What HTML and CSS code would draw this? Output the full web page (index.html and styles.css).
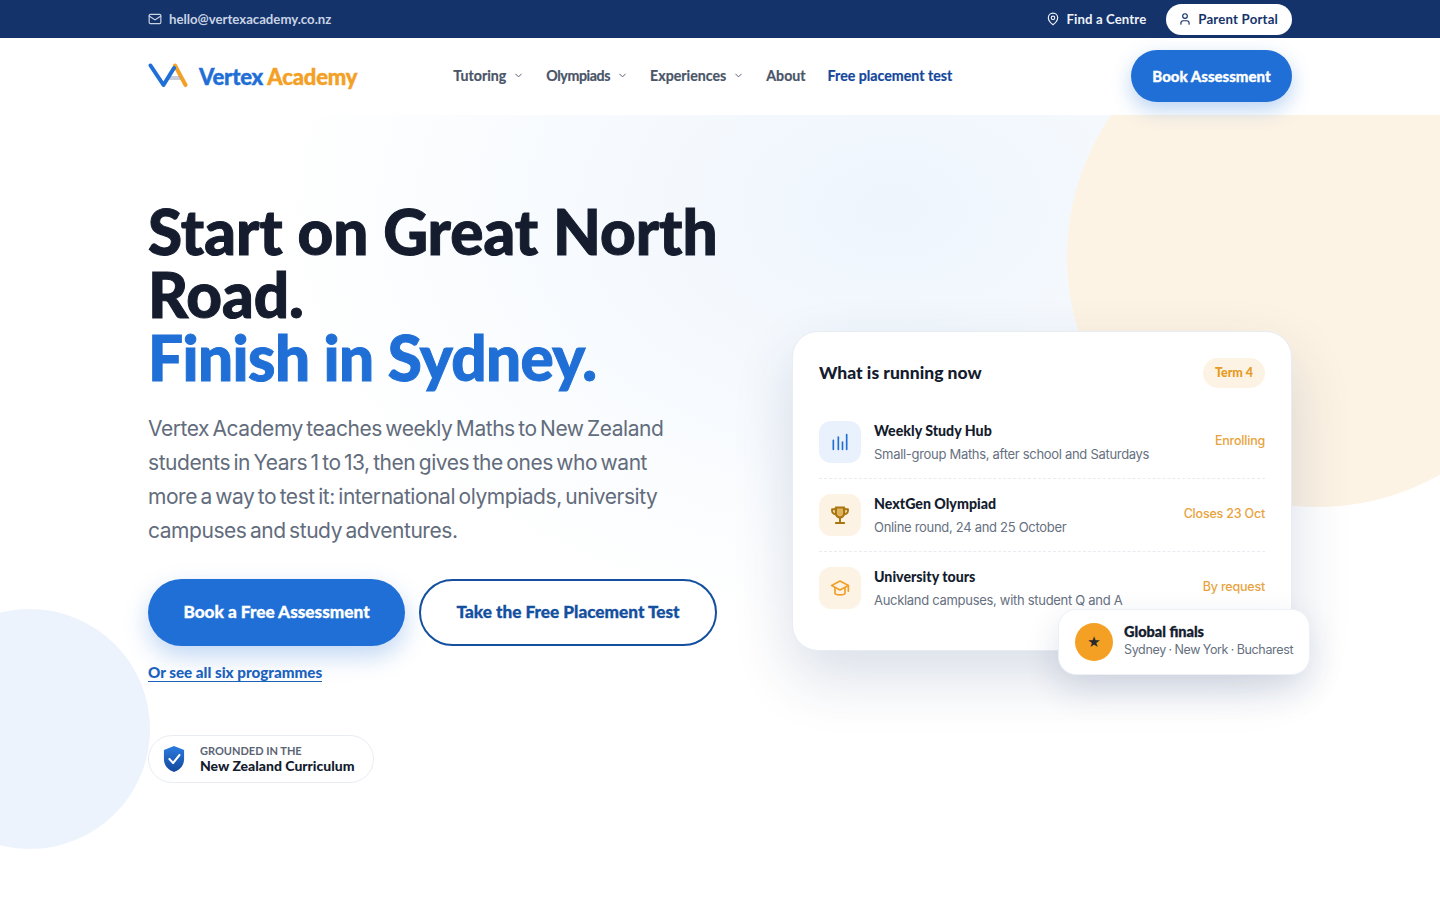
FILE: index.html
```html
<!DOCTYPE html>
<html lang="en">
<head>
<meta charset="UTF-8">
<meta name="viewport" content="width=device-width, initial-scale=1.0">
<title>Vertex Academy</title>
<link rel="stylesheet" href="styles.css">
</head>
<body>

<!-- Top bar -->
<div class="topbar">
    <div class="wrap topbar-inner">
        <a class="top-mail" href="#">
            <svg class="icon-14" viewBox="0 0 24 24"><rect x="2" y="4" width="20" height="16" rx="2"/><path d="m22 7-8.97 5.7a1.94 1.94 0 0 1-2.06 0L2 7"/></svg>
            hello@vertexacademy.co.nz
        </a>
        <div class="top-right">
            <a class="top-link" href="#">
                <svg class="icon-14" viewBox="0 0 24 24"><path d="M20 10c0 6-8 12-8 12s-8-6-8-12a8 8 0 0 1 16 0Z"/><circle cx="12" cy="10" r="3"/></svg>
                Find a Centre
            </a>
            <a class="portal" href="#">
                <svg class="icon-14" viewBox="0 0 24 24"><path d="M19 21v-2a4 4 0 0 0-4-4H9a4 4 0 0 0-4 4v2"/><circle cx="12" cy="7" r="4"/></svg>
                Parent Portal
            </a>
        </div>
    </div>
</div>

<!-- Navigation -->
<header class="navbar">
    <div class="wrap navbar-inner">
        <a class="logo" href="#">
            <svg class="logo-mark" viewBox="0 0 40 26">
                <path class="logo-a" d="M27 2.500 37.500 22"/>
                <path class="logo-bar" d="M21 14h11M20 16h12"/>
                <path class="logo-v" d="M2.500 2.500 15.500 22 26 5"/>
            </svg>
            <span class="logo-text"><span class="logo-blue">Vertex</span> <span class="logo-orange">Academy</span></span>
        </a>
        <nav class="nav-links">
            <a href="#">Tutoring <svg class="chev" viewBox="0 0 24 24"><path d="m6 9 6 6 6-6"/></svg></a>
            <a class="nav-oly" href="#">Olympiads <svg class="chev" viewBox="0 0 24 24"><path d="m6 9 6 6 6-6"/></svg></a>
            <a href="#">Experiences <svg class="chev" viewBox="0 0 24 24"><path d="m6 9 6 6 6-6"/></svg></a>
            <a href="#">About</a>
            <a class="nav-free" href="#">Free placement test</a>
        </nav>
        <a class="nav-book" href="#">Book Assessment</a>
    </div>
</header>

<!-- Hero -->
<section class="hero">
    <div class="circle-peach"></div>
    <div class="circle-blue"></div>
    <div class="wrap hero-grid">
        <div class="hero-left">
            <h1>Start on Great North Road. <span class="h1-blue">Finish in Sydney.</span></h1>
            <p class="lead">Vertex Academy teaches weekly Maths to New Zealand students in Years 1 to 13, then gives the ones who want more a way to test it: international olympiads, university campuses and study adventures.</p>
            <div class="hero-btns">
                <a class="btn btn-solid" href="#">Book a Free Assessment</a>
                <a class="btn btn-line" href="#">Take the Free Placement Test</a>
            </div>
            <a class="all-link" href="#">Or see all six programmes</a>
            <div class="curriculum">
                <svg class="shield" viewBox="0 0 24 28" preserveAspectRatio="none">
                    <defs><linearGradient id="shieldFill" x1="0" y1="0" x2="0" y2="1"><stop offset="0" stop-color="#2b7be0"/><stop offset="1" stop-color="#14479c"/></linearGradient></defs>
                    <path fill="url(#shieldFill)" d="M12 1 23 5v9c0 7-5 11-11 13C6 25 1 21 1 14V5Z"/>
                    <path class="shield-tick" d="m7 14 4 4 7-8"/>
                </svg>
                <div class="cur-text">
                    <div class="cur-small">GROUNDED IN THE</div>
                    <div class="cur-big">New Zealand Curriculum</div>
                </div>
            </div>
        </div>

        <div class="card">
            <div class="card-head">
                <h3>What is running now</h3>
                <span class="term">Term 4</span>
            </div>
            <div class="row">
                <div class="row-icon tint-blue">
                    <svg viewBox="0 0 24 24" class="icon-bars"><path d="M4 10v11M10 6v15M15 12v9M20 3v18"/></svg>
                </div>
                <div class="row-body">
                    <div class="row-title">Weekly Study Hub</div>
                    <div class="row-sub">Small-group Maths, after school and Saturdays</div>
                </div>
                <div class="row-status">Enrolling</div>
            </div>
            <div class="row">
                <div class="row-icon tint-peach">
                    <svg viewBox="0 0 24 24" class="icon-trophy"><path d="M7 3h10v7a5 5 0 0 1-10 0Z" fill="#e0b25c" stroke-width="2.600"/><path d="M7 5H2.500v2A4 4 0 0 0 7 11M17 5h4.500v2A4 4 0 0 1 17 11M12 15v6M7 21.500h10" stroke-width="2.400"/></svg>
                </div>
                <div class="row-body">
                    <div class="row-title">NextGen Olympiad</div>
                    <div class="row-sub">Online round, 24 and 25 October</div>
                </div>
                <div class="row-status">Closes 23 Oct</div>
            </div>
            <div class="row row-last">
                <div class="row-icon tint-peach">
                    <svg viewBox="0 0 24 24" class="icon-cap"><path d="M12 3.500 22 9l-10 5.500L2 9Z"/><path d="M6 11.500V18c0 3 12 3 12 0v-6.500"/><path d="M22 9v7"/></svg>
                </div>
                <div class="row-body">
                    <div class="row-title">University tours</div>
                    <div class="row-sub">Auckland campuses, with student Q and A</div>
                </div>
                <div class="row-status">By request</div>
            </div>
            <div class="float-card">
                <div class="star">★</div>
                <div class="float-text">
                    <div class="float-title">Global finals</div>
                    <div class="float-sub">Sydney · New York · Bucharest</div>
                </div>
            </div>
        </div>
    </div>
</section>

</body>
</html>
```

FILE: styles.css
```css
/* General Styles */
* {
    margin: 0;
    padding: 0;
    box-sizing: border-box;
}

body {
    font-family: 'Inter', 'Liberation Sans', sans-serif;
    background: #fff;
    color: #141c2e;
    height: 900px;
    overflow: hidden;
}

a {
    text-decoration: none;
    color: inherit;
}

svg {
    fill: none;
    stroke: currentColor;
    stroke-width: 2;
    stroke-linecap: round;
    stroke-linejoin: round;
    flex-shrink: 0;
}

.wrap {
    width: 1144px;
    margin: 0 auto;
}

.icon-14 {
    width: 14px;
    height: 14px;
}

/* Top bar */
.topbar {
    background: #14336b;
    height: 38px;
    font-family: 'Lato', sans-serif;
    font-size: 13.200px;
    font-weight: 700;
}

.topbar-inner {
    height: 38px;
    display: flex;
    justify-content: space-between;
    align-items: center;
}

.top-mail {
    display: flex;
    align-items: center;
    gap: 7px;
    color: #c9d3e4;
}

.top-right {
    display: flex;
    align-items: center;
    gap: 20px;
}

.top-link {
    display: flex;
    align-items: center;
    gap: 7px;
    color: #eef2f8;
    letter-spacing: 0.1px;
}

.portal {
    display: flex;
    align-items: center;
    gap: 6px;
    height: 31px;
    padding: 0 14px 0 12px;
    background: #fff;
    color: #14336b;
    border-radius: 16px;
    letter-spacing: 0.2px;
}

/* Navigation */
.navbar {
    background: #fff;
    height: 77px;
    position: relative;
    z-index: 2;
}

.navbar-inner {
    height: 76px;
    display: flex;
    align-items: center;
    font-family: 'Lato', sans-serif;
}

.logo {
    display: flex;
    align-items: center;
    gap: 11px;
}

.logo-mark {
    width: 40px;
    height: 26px;
}

.logo-v {
    stroke: #1f6fd6;
    stroke-width: 4;
}

.logo-a {
    stroke: #f4a024;
    stroke-width: 4;
}

.logo-bar {
    stroke: #8f9db3;
    stroke-width: 1;
}

.logo-text {
    font-size: 22px;
    font-weight: 900;
    letter-spacing: -0.2px;
    -webkit-text-stroke: 0.4px;
}

.logo-blue {
    color: #1f6fd6;
}

.logo-orange {
    color: #f4a024;
}

.nav-links {
    display: flex;
    align-items: center;
    gap: 22px;
    margin-left: 96px;
    margin-bottom: 2px;
    font-size: 14.200px;
    font-weight: 700;
    color: #4a5568;
    -webkit-text-stroke: 0.2px;
}

.nav-links a {
    display: flex;
    align-items: center;
    gap: 7px;
}

.nav-links .nav-oly {
    letter-spacing: -0.4px;
}

.chev {
    width: 11px;
    height: 11px;
}

.nav-links .nav-free {
    color: #14479c;
}

.nav-book {
    margin-left: auto;
    width: 161px;
    height: 52px;
    padding-bottom: 1px;
    border-radius: 26px;
    background: #1f6fd6;
    color: #fff;
    font-size: 15px;
    font-weight: 900;
    -webkit-text-stroke: 0.3px;
    display: flex;
    align-items: center;
    justify-content: center;
    box-shadow: 0 8px 20px rgba(31, 111, 214, 0.3);
}

/* Hero */
.hero {
    position: relative;
    height: 785px;
    overflow: hidden;
    background: radial-gradient(ellipse 620px 420px at 62% 12%, #eef5fd 0%, #ffffff 100%);
}

.circle-peach {
    position: absolute;
    left: 1067px;
    top: -108px;
    width: 500px;
    height: 500px;
    border-radius: 50%;
    background: #fdf3e4;
}

.circle-blue {
    position: absolute;
    left: -90px;
    top: 494px;
    width: 240px;
    height: 240px;
    border-radius: 50%;
    background: #edf3fc;
}

.hero-grid {
    position: relative;
    display: grid;
    grid-template-columns: 600px 500px;
    column-gap: 44px;
    align-items: center;
    padding-top: 85px;
}

h1 {
    font-family: 'Lato', sans-serif;
    font-size: 62px;
    font-weight: 900;
    line-height: 63px;
    color: #141c2e;
    -webkit-text-stroke: 1px;
}

.h1-blue {
    display: block;
    color: #1f6fd6;
    letter-spacing: -0.6px;
}

.lead {
    margin-top: 23px;
    width: 530px;
    font-size: 21px;
    line-height: 34px;
    color: #626c7c;
    letter-spacing: -0.45px;
    word-spacing: -2px;
}

.hero-btns {
    display: flex;
    gap: 14px;
    margin-top: 31px;
}

.btn {
    height: 67px;
    padding-bottom: 2px;
    border-radius: 34px;
    font-family: 'Lato', sans-serif;
    font-size: 17.200px;
    font-weight: 900;
    -webkit-text-stroke: 0.3px;
    display: flex;
    align-items: center;
    justify-content: center;
}

.btn-solid {
    width: 257px;
    background: #1f6fd6;
    color: #fff;
    box-shadow: 0 10px 24px rgba(31, 111, 214, 0.28);
}

.btn-line {
    width: 298px;
    border: 2px solid #14509f;
    background: #fff;
    color: #14509f;
}

.all-link {
    display: inline-block;
    margin-top: 18px;
    font-family: 'Lato', sans-serif;
    font-size: 15.200px;
    font-weight: 900;
    line-height: 17px;
    color: #1b62bd;
    border-bottom: 1px solid #1b62bd;
}

.curriculum {
    display: flex;
    align-items: center;
    gap: 15px;
    width: 226px;
    height: 48px;
    margin-top: 53px;
    padding-left: 14px;
    background: #fff;
    border: 1px solid #e9edf3;
    border-radius: 24px;
    font-family: 'Lato', sans-serif;
}

.shield {
    width: 22px;
    height: 28px;
    stroke: none;
}

.shield-tick {
    stroke: #fff;
    stroke-width: 2.200;
}

.cur-text {
    padding-bottom: 2px;
}

.cur-small {
    font-size: 11px;
    font-weight: 700;
    line-height: 14px;
    color: #5a6475;
}

.cur-big {
    font-size: 14px;
    font-weight: 900;
    line-height: 15px;
    color: #141c2e;
}

/* Running now card */
.card {
    position: relative;
    height: 320px;
    margin-bottom: 2px;
    padding: 26px 26px 0;
    background: #fff;
    border: 1px solid #e8edf4;
    border-radius: 26px;
    box-shadow: 0 26px 60px rgba(20, 51, 107, 0.16);
}

.card-head {
    display: flex;
    justify-content: space-between;
    align-items: center;
    height: 30px;
    margin-bottom: 18px;
}

.card-head h3 {
    font-family: 'Lato', sans-serif;
    font-size: 17.500px;
    font-weight: 900;
    color: #141c2e;
}

.term {
    width: 62px;
    height: 30px;
    border-radius: 15px;
    background: #fdf3e4;
    color: #e69a1e;
    font-family: 'Lato', sans-serif;
    font-size: 12.500px;
    font-weight: 900;
    display: flex;
    align-items: center;
    justify-content: center;
}

.row {
    display: flex;
    align-items: center;
    padding: 15px 0 14px;
    border-bottom: 1px dashed #e8ebf0;
}

.row-last {
    border-bottom: 0;
}

.row-icon {
    width: 42px;
    height: 42px;
    border-radius: 12px;
    display: flex;
    align-items: center;
    justify-content: center;
    margin-right: 13px;
}

.row-icon svg {
    width: 20px;
    height: 20px;
}

.tint-blue {
    background: #e9f1fc;
}

.tint-peach {
    background: #fdf3e4;
}

.icon-bars {
    color: #1f6fd6;
}

.icon-trophy {
    color: #a9750f;
}

.icon-cap {
    color: #f0a02a;
}

.row-body {
    flex: 1;
}

.row-title {
    font-family: 'Lato', sans-serif;
    font-size: 14.200px;
    font-weight: 900;
    line-height: 20px;
    color: #141c2e;
}

.row-sub {
    margin-top: 3px;
    font-size: 13px;
    line-height: 20px;
    letter-spacing: -0.3px;
    color: #667080;
}

.row-status {
    margin-bottom: 3px;
    font-size: 12.500px;
    font-weight: 500;
    letter-spacing: -0.2px;
    color: #e8a33d;
}

/* Floating card */
.float-card {
    position: absolute;
    left: 265px;
    top: 277px;
    width: 252px;
    height: 66px;
    display: flex;
    align-items: center;
    gap: 11px;
    padding-left: 16px;
    background: #fff;
    border: 1px solid #edf0f5;
    border-radius: 18px;
    box-shadow: 0 14px 34px rgba(20, 51, 107, 0.14);
}

.star {
    width: 38px;
    height: 38px;
    border-radius: 50%;
    background: #f4a024;
    color: #2a2a2a;
    font-family: 'DejaVu Sans', sans-serif;
    font-size: 15px;
    display: flex;
    align-items: center;
    justify-content: center;
}

.float-text {
    padding-bottom: 3px;
}

.float-title {
    font-family: 'Lato', sans-serif;
    font-size: 14.500px;
    font-weight: 900;
    line-height: 18px;
    color: #141c2e;
    -webkit-text-stroke: 0.3px;
}

.float-sub {
    font-size: 12.500px;
    line-height: 17px;
    letter-spacing: -0.35px;
    word-spacing: -0.5px;
    color: #667080;
}
```
